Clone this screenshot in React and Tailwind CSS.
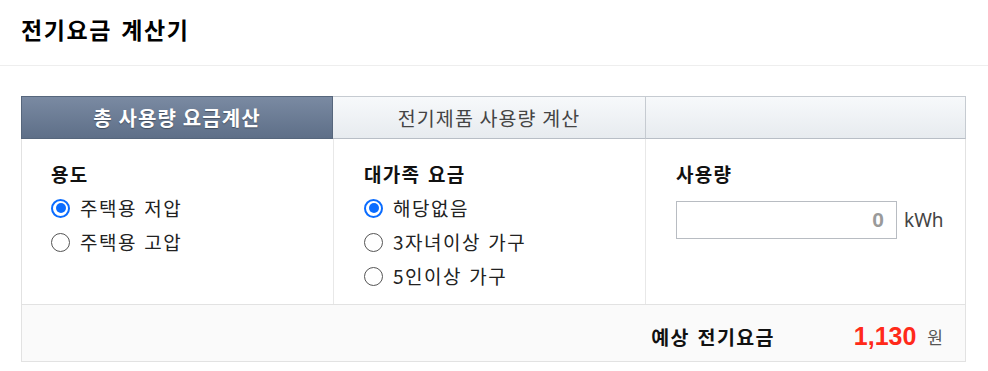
import React, { useState } from "react";

const font = { fontFamily: '"Noto Sans CJK KR", "Noto Sans", sans-serif' };
const num = { fontFamily: '"Liberation Sans", Arial, sans-serif' };

const Radio = ({ checked, label, onChange }) => (
  <label className="flex h-[34px] cursor-pointer items-center gap-[10px]" onClick={onChange}>
    <span
      className={`flex h-[19px] w-[19px] items-center justify-center rounded-full ${
        checked ? "border-2 border-[#0a6cff]" : "border-[1.5px] border-[#555]"
      }`}
    >
      {checked ? <span className="h-[10px] w-[10px] rounded-full bg-[#0a6cff]" /> : null}
    </span>
    <span className="text-[19px] tracking-[0.08em] text-[#222] [word-spacing:0.08em]">{label}</span>
  </label>
);

const Heading = ({ children }) => (
  <div className="flex h-[33px] items-center text-[19px] font-bold tracking-[0.07em] text-[#111] [word-spacing:0.1em]">
    {children}
  </div>
);

export default function App() {
  const [usage, setUsage] = useState(0);
  const [family, setFamily] = useState(0);

  return (
    <div className="min-h-screen bg-white" style={font}>
      <div className="flex h-[66px] items-center border-b border-[#eeeeee] px-[21px]">
        <h1 className="pb-[7px] text-[23px] font-bold tracking-[0.07em] text-black [word-spacing:0.1em]">
          전기요금 계산기
        </h1>
      </div>

      <div className="mx-[21px] mt-[30px] w-[945px]">
        <div className="grid h-[43px] grid-cols-[312px_313px_320px] tracking-[0.07em] [word-spacing:0.1em]">
          <button className="border border-[#56667c] bg-gradient-to-b from-[#7a8aa2] to-[#5e6f88] text-[20px] font-bold text-white [text-shadow:0_1px_1px_rgba(0,0,0,0.35)]">
            총 사용량 요금계산
          </button>
          <button className="border border-l-0 border-[#c6cbd1] border-b-[#b8bec6] bg-gradient-to-b from-[#f7f9fb] to-[#e7ebef] text-[19.5px] text-[#444]">
            전기제품 사용량 계산
          </button>
          <div className="border border-l-0 border-[#c6cbd1] border-b-[#b8bec6] bg-gradient-to-b from-[#f7f9fb] to-[#e7ebef]" />
        </div>

        <div className="grid h-[165px] grid-cols-[312px_312px_321px] border-x border-[#e2e2e2]">
          <div className="border-r border-[#e8e8e8] pl-[29px] pt-[19px]">
            <Heading>용도</Heading>
            <Radio checked={usage === 0} label="주택용 저압" onChange={() => setUsage(0)} />
            <Radio checked={usage === 1} label="주택용 고압" onChange={() => setUsage(1)} />
          </div>
          <div className="border-r border-[#e8e8e8] pl-[30px] pt-[19px]">
            <Heading>대가족 요금</Heading>
            <Radio checked={family === 0} label="해당없음" onChange={() => setFamily(0)} />
            <Radio checked={family === 1} label="3자녀이상 가구" onChange={() => setFamily(1)} />
            <Radio checked={family === 2} label="5인이상 가구" onChange={() => setFamily(2)} />
          </div>
          <div className="pl-[30px] pt-[19px]">
            <Heading>사용량</Heading>
            <div className="mt-[10px] flex items-center gap-[7px]">
              <input
                defaultValue="0"
                className="h-[38px] w-[221px] border border-[#b8bcc2] pr-[12px] text-right text-[21px] font-bold text-[#9a9a9a] outline-none"
                style={num}
              />
              <span className="text-[19px] text-[#444]" style={{ fontFamily: '"Noto Sans", sans-serif' }}>
                kWh
              </span>
            </div>
          </div>
        </div>

        <div className="flex h-[58px] items-center justify-end border border-[#e2e2e2] bg-[#fafafa] pr-[22px] pt-[8px]">
          <span className="mr-[79px] text-[19.5px] font-bold tracking-[0.07em] text-[#111] [word-spacing:0.1em]">
            예상 전기요금
          </span>
          <span className="text-[25px] font-bold text-[#ff2a1a]" style={num}>
            1,130
          </span>
          <span className="ml-[11px] text-[17px] text-[#555]">원</span>
        </div>
      </div>
    </div>
  );
}
